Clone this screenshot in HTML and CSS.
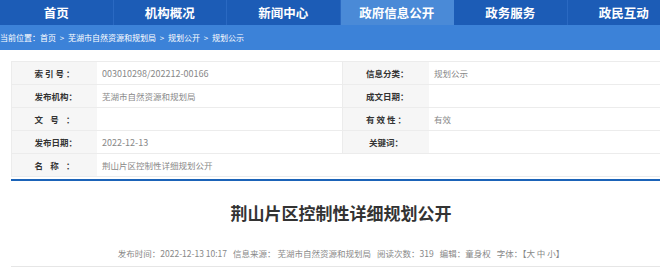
FILE: index.html
```html
<!DOCTYPE html>
<html lang="zh-CN">
<head>
<meta charset="utf-8">
<title>荆山片区控制性详细规划公开</title>
<link rel="stylesheet" href="styles.css">
</head>
<body>
<nav class="nav">
  <a class="nav-item">首页</a>
  <a class="nav-item">机构概况</a>
  <a class="nav-item">新闻中心</a>
  <a class="nav-item active">政府信息公开</a>
  <a class="nav-item">政务服务</a>
  <a class="nav-item">政民互动</a>
</nav>
<div class="crumb">当前位置：首页 &gt; 芜湖市自然资源和规划局 &gt; 规划公开 &gt; 规划公示</div>
<main class="content">
  <table class="info">
    <tr>
      <th><span class="lbl">索引号：</span></th>
      <td class="num">003010298/202212-00166</td>
      <th><span class="lbl">信息分类：</span></th>
      <td>规划公示</td>
    </tr>
    <tr>
      <th><span class="lbl">发布机构：</span></th>
      <td>芜湖市自然资源和规划局</td>
      <th><span class="lbl">成文日期：</span></th>
      <td></td>
    </tr>
    <tr>
      <th><span class="lbl">文号：</span></th>
      <td></td>
      <th><span class="lbl">有效性：</span></th>
      <td>有效</td>
    </tr>
    <tr>
      <th><span class="lbl">发布日期：</span></th>
      <td class="num">2022-12-13</td>
      <th><span class="lbl lbl-short">关键词：</span></th>
      <td></td>
    </tr>
    <tr>
      <th><span class="lbl">名称：</span></th>
      <td colspan="3">荆山片区控制性详细规划公开</td>
    </tr>
  </table>
  <div class="rule"></div>
  <h1 class="title">荆山片区控制性详细规划公开</h1>
  <div class="meta">
    <span>发布时间：2022-12-13 10:17</span>
    <span>信息来源： 芜湖市自然资源和规划局</span>
    <span>阅读次数：319</span>
    <span>编辑：童身权</span>
    <span>字体：【大 中 小】</span>
  </div>
</main>
</body>
</html>
```
FILE: styles.css
```css
html, body {
  margin: 0;
  padding: 0;
  background: #fff;
  overflow: hidden;
  font-family: "Noto Sans CJK SC", "Microsoft YaHei", sans-serif;
}

.nav {
  display: flex;
  height: 25px;
  background: #1c5cb6;
  overflow: hidden;
}

.nav-item {
  box-sizing: border-box;
  flex: 0 0 113.5px;
  text-align: center;
  line-height: 25px;
  font-size: 12.5px;
  font-weight: bold;
  color: #fff;
  border-right: 1px solid #2a69c2;
  white-space: nowrap;
}

.nav-item.active {
  background: #4a8ad7;
  border-right-color: #4a8ad7;
}

.crumb {
  height: 25px;
  line-height: 25px;
  background: #3c82d8;
  color: #fff;
  font-size: 8px;
  word-spacing: 2px;
  white-space: nowrap;
}

.content {
  width: 649px;
  margin: 11px 0 0 11px;
  overflow: hidden;
}

.info {
  width: 660px;
  border-collapse: collapse;
  table-layout: fixed;
  border-top: 1px solid #ececec;
}

.info th,
.info td {
  height: 22px;
  padding: 0;
  border-bottom: 1px solid #ececec;
  font-size: 8.5px;
  vertical-align: middle;
}

.info th {
  width: 85px;
  background: #f6f6f6;
  color: #333;
  font-weight: bold;
  text-align: center;
  border-left: 1px solid #ececec;
}

.info tr th:nth-child(3) {
  width: 86px;
}

.info td {
  color: #888;
  padding-left: 5px;
  text-align: left;
}

.info td:nth-child(2) {
  width: 240px;
}

.info td.num {
  font-size: 9px;
}

.lbl {
  display: inline-block;
  width: 40px;
  text-align: justify;
  text-align-last: justify;
  white-space: nowrap;
}

.lbl-short {
  width: 34px;
  text-align: center;
  text-align-last: center;
}

.rule {
  height: 2px;
  margin-top: 2px;
  background: #1b63b8;
}

.title {
  margin: 20px 0 0;
  padding-left: 11px;
  line-height: 24px;
  font-size: 17px;
  font-weight: bold;
  color: #333;
  text-align: center;
}

.meta {
  display: flex;
  justify-content: center;
  gap: 6px;
  margin-top: 21px;
  padding-left: 11px;
  line-height: 14px;
  font-size: 8.5px;
  color: #888;
  padding-bottom: 6px;
  border-bottom: 1px solid #e6e6e6;
  white-space: nowrap;
}
```
